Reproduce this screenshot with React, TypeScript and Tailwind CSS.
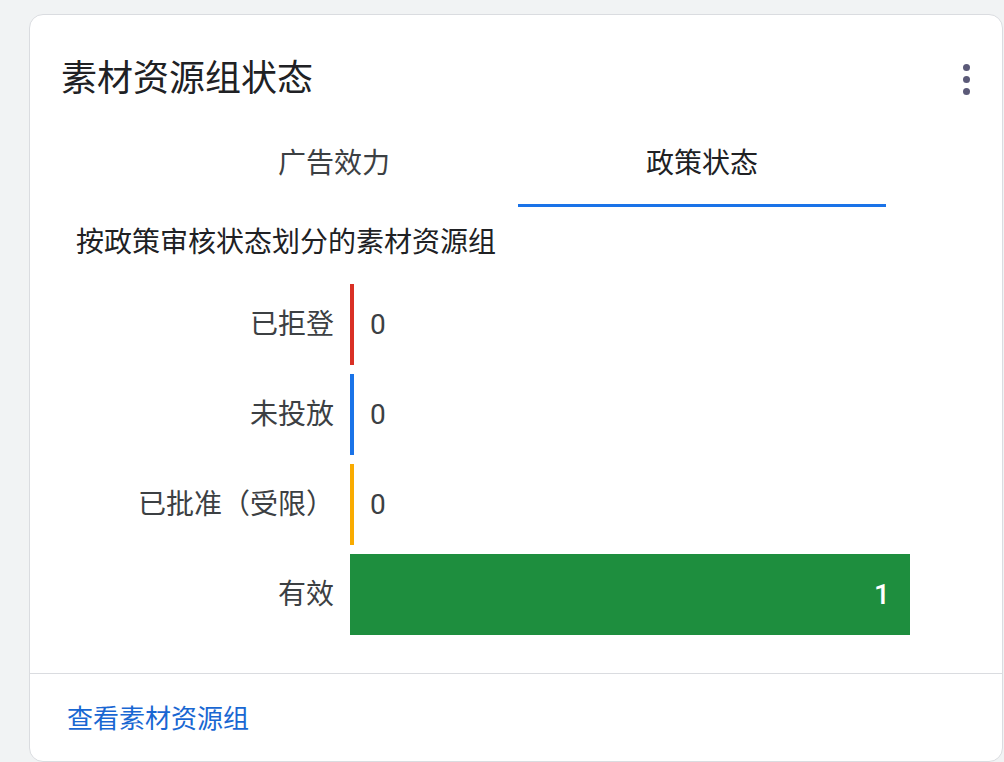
import React from "react";

const rows = [
  { label: "已拒登", value: 0, color: "bg-[#d93025]" },
  { label: "未投放", value: 0, color: "bg-[#1a73e8]" },
  { label: "已批准（受限）", value: 0, color: "bg-[#f9ab00]" },
  { label: "有效", value: 1, color: "bg-[#1e8e3e]" },
];

const max = 1;
const fullWidth = 560;

function Kebab() {
  return (
    <button className="flex h-[40px] w-[24px] flex-col items-center justify-center gap-[5px]">
      <span className="block h-[7px] w-[7px] rounded-full bg-[#5b5a78]" />
      <span className="block h-[7px] w-[7px] rounded-full bg-[#5b5a78]" />
      <span className="block h-[7px] w-[7px] rounded-full bg-[#5b5a78]" />
    </button>
  );
}

export default function App() {
  return (
    <div
      className="h-[762px] overflow-hidden bg-[#f1f3f4] pl-[29px] pt-[14px]"
      style={{ fontFamily: "Roboto, 'Noto Sans CJK SC', sans-serif" }}
    >
      <div className="w-[974px] rounded-[14px] border border-[#dadce0] bg-white">
        {/* Header */}
        <div className="flex items-center justify-between pl-[31px] pr-[24px] pt-[42px]">
          <h2 className="text-[36px] leading-[44px] font-normal text-[#202124]">素材资源组状态</h2>
          <Kebab />
        </div>

        {/* Tabs */}
        <div className="ml-[120px] mt-[42px] flex">
          <div className="flex h-[64px] w-[368px] flex-col pt-[1px]">
            <div className="h-[40px] text-center text-[28px] leading-[40px] text-[#3c4043]">广告效力</div>
          </div>
          <div className="flex h-[64px] w-[368px] flex-col pt-[1px]">
            <div className="h-[40px] text-center text-[28px] leading-[40px] text-[#202124]">政策状态</div>
            <div className="mt-auto h-[3px] bg-[#1a73e8]" />
          </div>
        </div>

        {/* Subtitle */}
        <p className="mt-[18px] pl-[46px] text-[28px] leading-[36px] text-[#202124]">
          按政策审核状态划分的素材资源组
        </p>

        {/* Chart */}
        <div className="mt-[23px] flex flex-col gap-[9px]">
          {rows.map((r) => (
            <div key={r.label} className="flex h-[81px] items-stretch">
              <div className="flex w-[304px] items-center justify-end text-[28px] text-[#3c4043]">
                {r.label}
              </div>
              <div className="ml-[16px] flex items-stretch">
                {r.value > 0 ? (
                  <div
                    className={`${r.color} flex items-center justify-end pr-[20px] text-[28px] font-medium text-white`}
                    style={{ width: (r.value / max) * fullWidth }}
                  >
                    {r.value}
                  </div>
                ) : (
                  <>
                    <div className={`${r.color} w-[4px]`} />
                    <div className="ml-[16px] flex items-center text-[28px] text-[#3c4043]">{r.value}</div>
                  </>
                )}
              </div>
            </div>
          ))}
        </div>

        {/* Footer */}
        <div className="mt-[38px] border-t border-[#dadce0] pb-[24px] pl-[37px] pt-[27px]">
          <a className="text-[26px] leading-[36px] text-[#1967d2]">查看素材资源组</a>
        </div>
      </div>
    </div>
  );
}
